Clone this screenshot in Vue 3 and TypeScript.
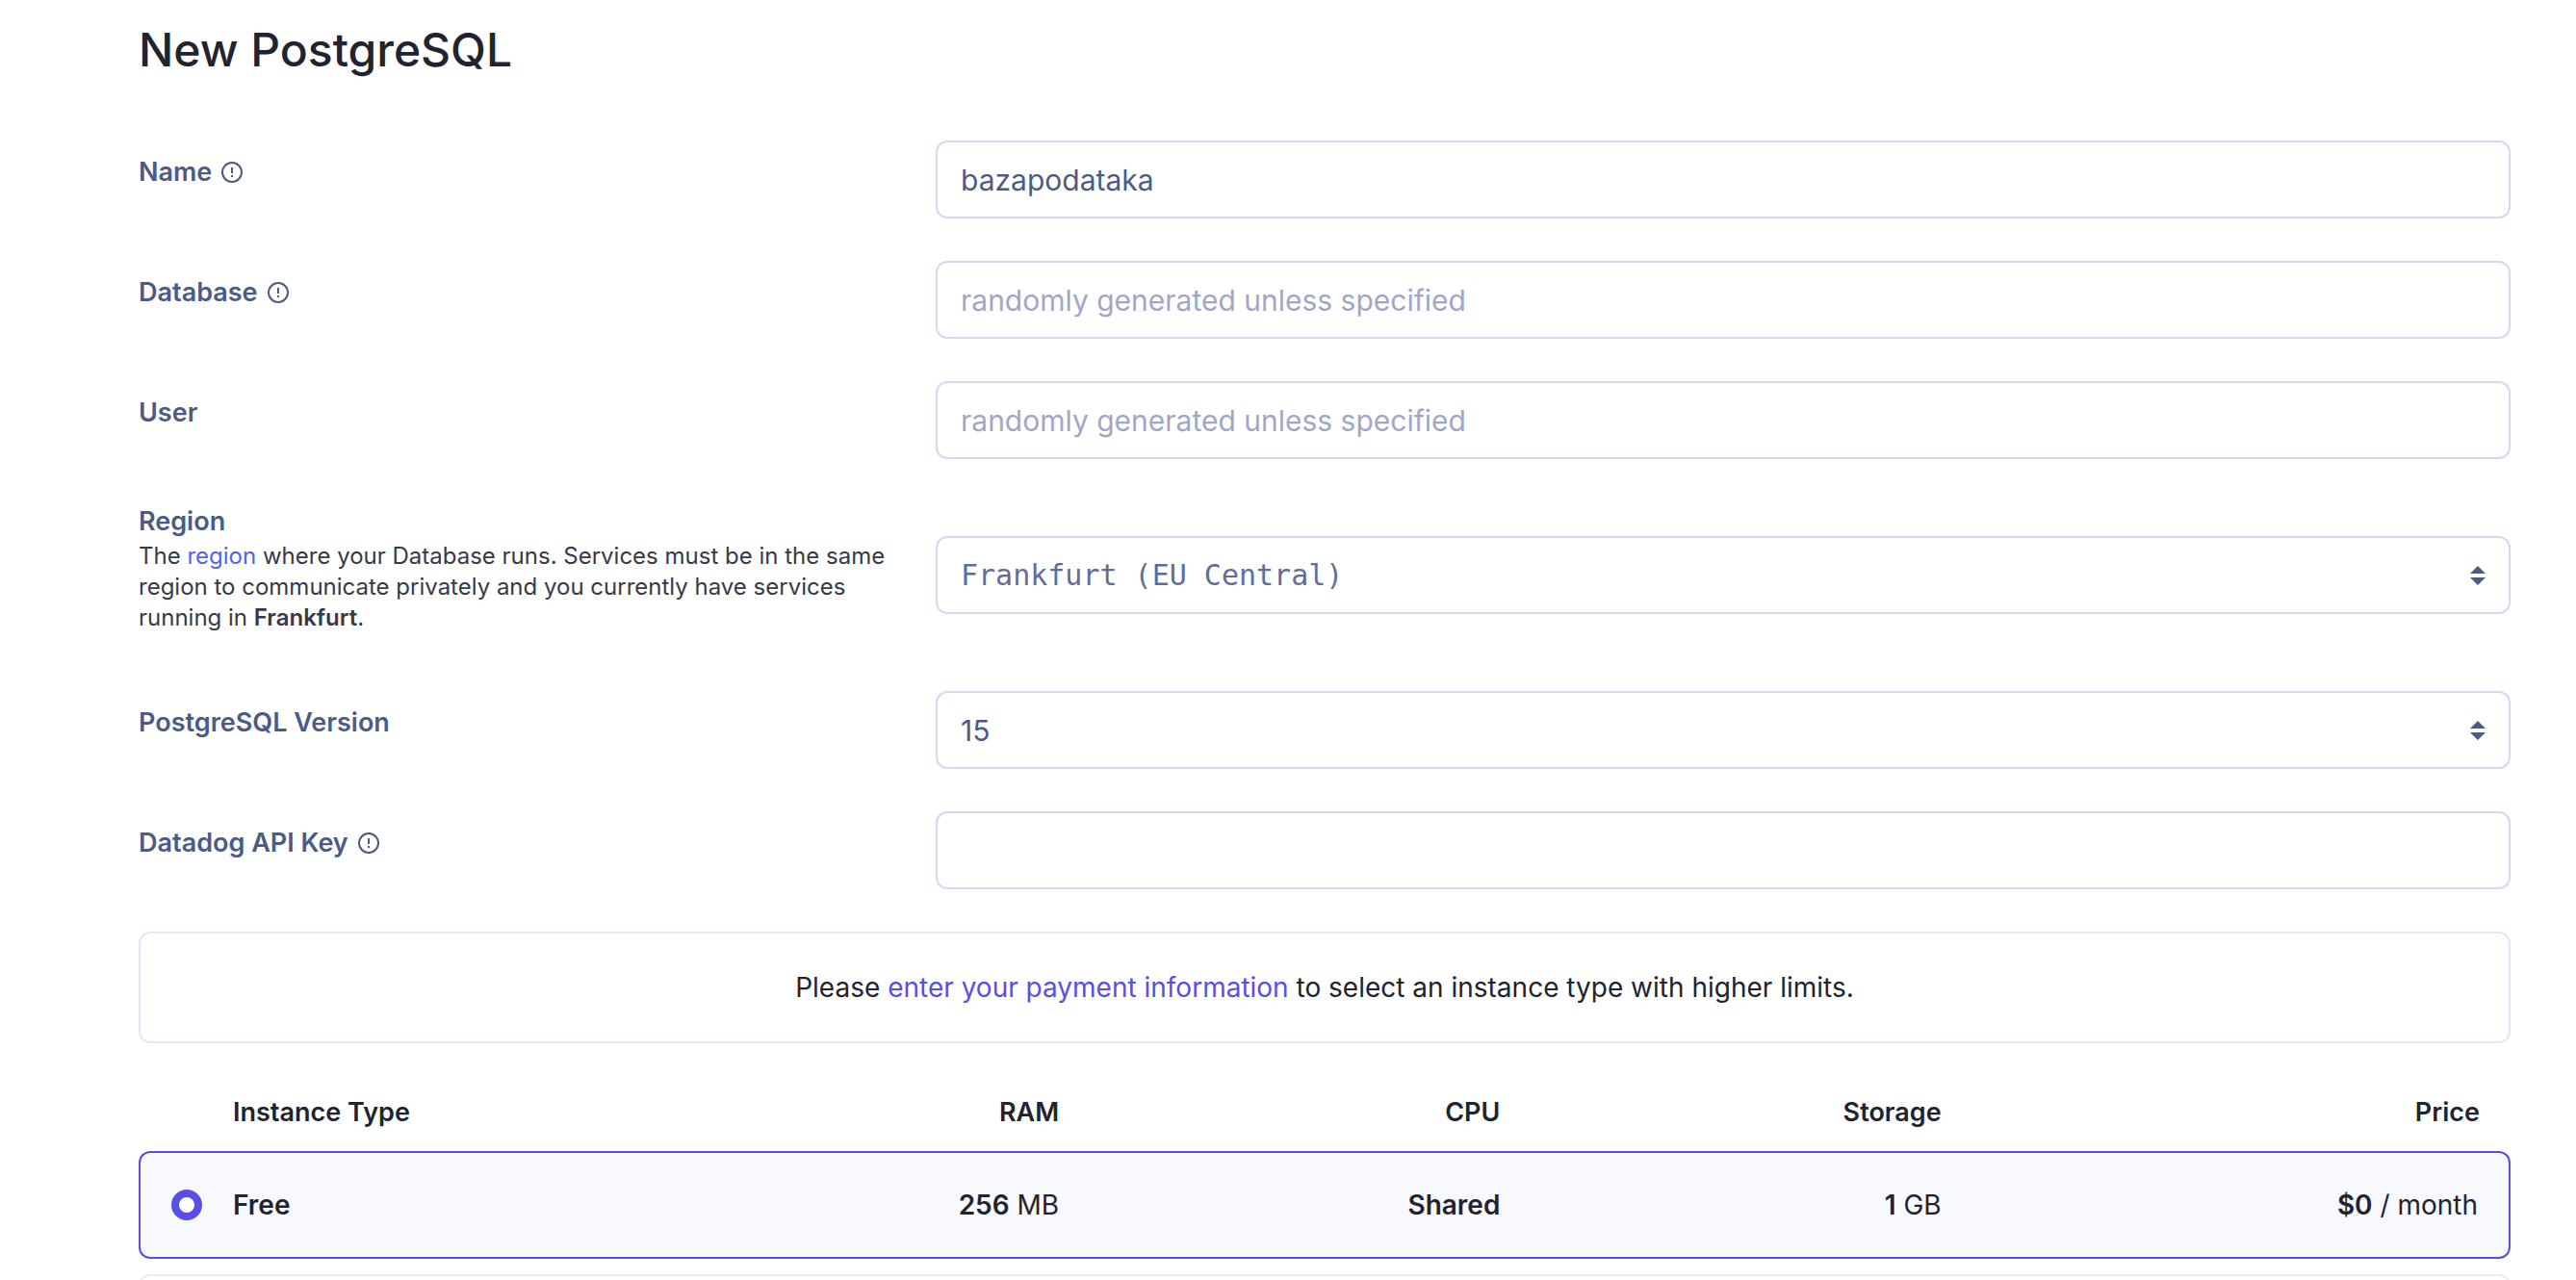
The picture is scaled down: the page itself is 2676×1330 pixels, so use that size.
<script setup lang="ts">
import { ref } from 'vue'

interface Plan {
  id: string
  name: string
  ram: [string, string]
  cpu: string
  storage: [string, string]
  price: [string, string]
}

const name = ref('bazapodataka')
const database = ref('')
const user = ref('')
const region = ref('Frankfurt (EU Central)')
const version = ref('15')
const datadogKey = ref('')
const selectedPlan = ref('free')

const plans: Plan[] = [
  { id: 'free', name: 'Free', ram: ['256', 'MB'], cpu: 'Shared', storage: ['1', 'GB'], price: ['$0', '/ month'] },
]
</script>

<template>
  <main class="page">
    <h1>New PostgreSQL</h1>

    <form class="form" @submit.prevent>
      <div class="row">
        <div class="caption">
          <label for="name">Name</label>
          <svg class="info" viewBox="0 0 24 24" aria-hidden="true">
            <circle cx="12" cy="12" r="10" />
            <path d="M12 7v6M12 15v2" />
          </svg>
        </div>
        <input id="name" v-model="name" class="field" type="text" />
      </div>

      <div class="row">
        <div class="caption">
          <label for="database">Database</label>
          <svg class="info" viewBox="0 0 24 24" aria-hidden="true">
            <circle cx="12" cy="12" r="10" />
            <path d="M12 7v6M12 15v2" />
          </svg>
        </div>
        <input id="database" v-model="database" class="field" type="text" placeholder="randomly generated unless specified" />
      </div>

      <div class="row">
        <div class="caption">
          <label for="user">User</label>
        </div>
        <input id="user" v-model="user" class="field" type="text" placeholder="randomly generated unless specified" />
      </div>

      <div class="row row-region">
        <div class="described">
          <label for="region">Region</label>
          <p class="description">
            The <a href="#region">region</a> where your Database runs. Services must be in the same
            region to communicate privately and you currently have services running in
            <strong>Frankfurt</strong>.
          </p>
        </div>
        <div class="select-box">
          <select id="region" v-model="region" class="field mono">
            <option>Frankfurt (EU Central)</option>
          </select>
          <svg class="arrows" viewBox="0 0 16 20" aria-hidden="true">
            <path d="M8 0l8 8H0zM0 12h16l-8 8z" />
          </svg>
        </div>
      </div>

      <div class="row">
        <div class="caption">
          <label for="version">PostgreSQL Version</label>
        </div>
        <div class="select-box">
          <select id="version" v-model="version" class="field">
            <option>15</option>
          </select>
          <svg class="arrows" viewBox="0 0 16 20" aria-hidden="true">
            <path d="M8 0l8 8H0zM0 12h16l-8 8z" />
          </svg>
        </div>
      </div>

      <div class="row">
        <div class="caption">
          <label for="datadog">Datadog API Key</label>
          <svg class="info" viewBox="0 0 24 24" aria-hidden="true">
            <circle cx="12" cy="12" r="10" />
            <path d="M12 7v6M12 15v2" />
          </svg>
        </div>
        <input id="datadog" v-model="datadogKey" class="field" type="text" />
      </div>

      <p class="notice">
        Please <a href="#billing">enter your payment information</a> to select an instance type with higher limits.
      </p>

      <table class="plans">
        <colgroup>
          <col class="col-radio" />
          <col />
          <col class="col-spec" />
          <col class="col-spec" />
          <col class="col-spec" />
          <col class="col-price" />
        </colgroup>
        <thead>
          <tr>
            <td></td>
            <th scope="col" class="start">Instance Type</th>
            <th scope="col">RAM</th>
            <th scope="col">CPU</th>
            <th scope="col">Storage</th>
            <th scope="col">Price</th>
          </tr>
        </thead>
        <tbody>
          <tr v-for="plan in plans" :key="plan.id" :class="{ selected: plan.id === selectedPlan }">
            <td class="pick">
              <input :id="`plan-${plan.id}`" v-model="selectedPlan" type="radio" name="plan" :value="plan.id" />
            </td>
            <td class="start">
              <label :for="`plan-${plan.id}`">{{ plan.name }}</label>
            </td>
            <td><strong>{{ plan.ram[0] }}</strong> {{ plan.ram[1] }}</td>
            <td><strong>{{ plan.cpu }}</strong></td>
            <td><strong>{{ plan.storage[0] }}</strong> {{ plan.storage[1] }}</td>
            <td><strong>{{ plan.price[0] }}</strong> {{ plan.price[1] }}</td>
          </tr>
          <tr>
            <td v-for="n in 6" :key="n"></td>
          </tr>
        </tbody>
      </table>
    </form>
  </main>
</template>

<style>
body {
  background: #fff;
}
</style>

<style scoped>
.page {
  box-sizing: border-box;
  height: 100vh;
  overflow: hidden;
  padding: 20px 68px 0 144px;
  font-family: Inter, 'Liberation Sans', sans-serif;
  font-size: 28px;
  line-height: 36px;
  color: #21232f;
}

h1 {
  margin: 0 0 62px;
  font-size: 48px;
  line-height: 64px;
  font-weight: 500;
}

.form {
  display: flex;
  flex-direction: column;
  gap: 44px;
}

.row {
  display: grid;
  grid-template-columns: minmax(0, 1fr) minmax(0, 2fr);
  column-gap: 10px;
}

.caption {
  display: flex;
  align-items: center;
  align-self: start;
  gap: 9px;
  padding-top: 15px;
}

.row label {
  font-size: 27px;
  font-weight: 600;
  color: #4b5a87;
}

.info {
  width: 24px;
  height: 24px;
  fill: none;
  stroke: #4b5a87;
  stroke-width: 2;
}

.row-region {
  align-items: center;
}

.described {
  padding: 3px 24px 16px 0;
}

.described label {
  display: block;
}

.description {
  margin: 2px 0 0;
  font-size: 24px;
  line-height: 32px;
  color: #363947;
}

.description strong {
  font-weight: 600;
}

a {
  color: #5850e6;
  text-decoration: none;
}

.description a {
  color: #4f63ec;
}

.field {
  box-sizing: border-box;
  width: 100%;
  height: 81px;
  margin: 0;
  padding: 0 24px;
  border: 2px solid #d0daf0;
  border-radius: 12px;
  background: #fff;
  font-family: inherit;
  font-size: 30px;
  color: #4b5a87;
  appearance: none;
  outline: none;
}

.field::placeholder {
  color: #9fa7c8;
  opacity: 1;
}

.mono {
  font-family: 'DejaVu Sans Mono', monospace;
  color: #606d99;
}

.select-box {
  position: relative;
}

.select-box .field {
  display: block;
}

.arrows {
  position: absolute;
  top: 50%;
  right: 26px;
  width: 16px;
  height: 20px;
  margin-top: -10px;
  fill: #4b5a87;
  pointer-events: none;
}

.notice {
  margin: 0;
  padding: 38px 24px;
  border: 2px solid #dfe7f8;
  border-radius: 12px;
  text-align: center;
}

.plans {
  width: 100%;
  margin-top: -6px;
  table-layout: fixed;
  border-collapse: separate;
  border-spacing: 0 16px;
}

.col-radio {
  width: 98px;
}

.col-spec {
  width: 18.6%;
}

.col-price {
  width: 22.7%;
}

.plans th,
.plans td {
  padding: 0 32px 0 0;
  text-align: right;
  font-weight: 400;
}

.plans th {
  padding-bottom: 6px;
  font-size: 27px;
  font-weight: 600;
}

.plans strong,
.plans label {
  font-weight: 600;
}

.plans .start {
  text-align: left;
}

.plans tbody td {
  height: 108px;
  border: solid #e6ebfa;
  border-width: 2px 0;
}

.plans tbody td:first-child {
  border-left-width: 2px;
  border-radius: 12px 0 0 12px;
}

.plans tbody td:last-child {
  border-right-width: 2px;
  border-radius: 0 12px 12px 0;
}

.plans .selected td {
  border-color: #5850e6;
  background: #f8f9fd;
}

.plans .pick {
  padding: 0 0 0 32px;
  text-align: left;
}

.pick input {
  display: block;
  box-sizing: border-box;
  width: 32px;
  height: 32px;
  margin: 0;
  border: 8px solid #5850e6;
  border-radius: 50%;
  background: #fff;
  appearance: none;
}
</style>
